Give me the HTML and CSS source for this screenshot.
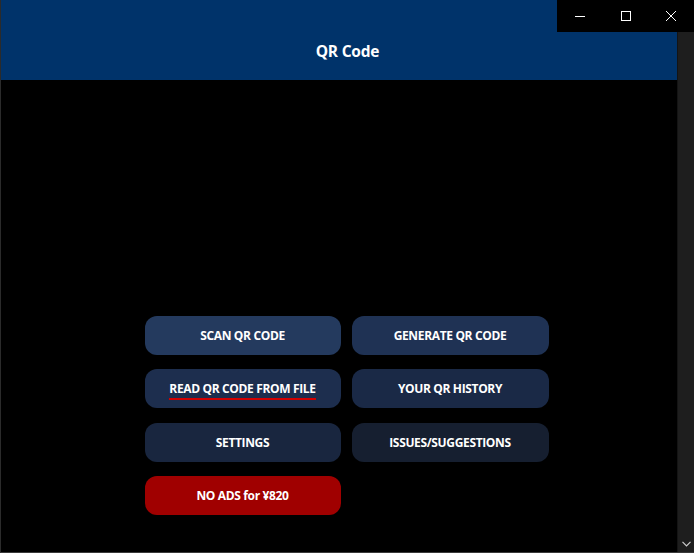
FILE: index.html
```html
<!DOCTYPE html>
<html lang="en">
<head>
  <meta charset="UTF-8" />
  <meta name="viewport" content="width=device-width, initial-scale=1.0"/>
  <title>QR Code</title>
  <link rel="stylesheet" href="styles.css">
</head>
<body>
  <div class="window">
    <header class="app-header">QR Code</header>

    <main class="menu">
      <div class="menu-grid">
        <button class="menu-button scan">SCAN QR CODE</button>
        <button class="menu-button generate">GENERATE QR CODE</button>
        <button class="menu-button read"><span class="spell">READ QR CODE FROM FILE</span></button>
        <button class="menu-button history">YOUR QR HISTORY</button>
        <button class="menu-button settings">SETTINGS</button>
        <button class="menu-button issues">ISSUES/SUGGESTIONS</button>
        <button class="menu-button no-ads">NO ADS for ¥820</button>
      </div>
    </main>

    <!-- window caption buttons sit over the header -->
    <div class="caption-buttons">
      <div class="caption-btn">
        <svg width="10" height="10" viewBox="0 0 10 10"><path d="M0 5.5h10" stroke="#fff" stroke-width="1"/></svg>
      </div>
      <div class="caption-btn">
        <svg width="10" height="10" viewBox="0 0 10 10"><rect x="0.5" y="0.5" width="9" height="9" fill="none" stroke="#fff" stroke-width="1"/></svg>
      </div>
      <div class="caption-btn">
        <svg width="10" height="10" viewBox="0 0 10 10"><path d="M0 0L10 10M10 0L0 10" stroke="#fff" stroke-width="1"/></svg>
      </div>
    </div>

    <div class="scrollbar">
      <svg class="scroll-arrow" width="9" height="6" viewBox="0 0 9 6"><path d="M0.5 0.8L4.5 4.8L8.5 0.8" fill="none" stroke="#ccc" stroke-width="1.2"/></svg>
    </div>
  </div>
</body>
</html>
```

FILE: styles.css
```css
:root {
  --header-bg: #00336a;
  --page-bg: #000000;
  --scroll-bg: #1e1e1e;
  --text-color: #ffffff;
}

html, body {
  margin: 0;
  height: 100%;
}

body {
  font-family: 'Open Sans', 'Noto Sans', sans-serif;
  background-color: var(--page-bg);
  color: var(--text-color);
  overflow: hidden;
}

.window {
  position: relative;
  height: 553px;
  display: flex;
  flex-direction: column;
  border-left: 1px solid #2b2b2b;
  border-bottom: 1px solid #3a3a3a;
  box-sizing: border-box;
}

.app-header {
  height: 80px;
  background-color: var(--header-bg);
  display: flex;
  justify-content: center;
  align-items: center;
  font-size: 15.5px;
  font-weight: 700;
  letter-spacing: -0.2px;
  padding-top: 21px;
  box-sizing: border-box;
}

.menu {
  flex-grow: 1;
  display: flex;
  justify-content: center;
  padding-top: 236px;
}

.menu-grid {
  display: grid;
  grid-template-columns: 196px 197px;
  grid-auto-rows: 39px;
  column-gap: 11px;
  row-gap: 14.3px;
  margin-left: -2px;
}

.menu-button {
  font-family: inherit;
  font-size: 12px;
  font-weight: 700;
  letter-spacing: -0.35px;
  color: var(--text-color);
  border: none;
  border-radius: 12px;
  padding: 0;
  cursor: pointer;
}

.scan { background-color: #243a5e; }
.generate { background-color: #1f3254; }
.read { background-color: #1d2e4e; }
.history { background-color: #1a2946; }
.settings { background-color: #19263f; }
.issues { background-color: #161f30; }
.no-ads { background-color: #a00000; }

.spell {
  border-bottom: 2px solid #d20000;
  padding-bottom: 1px;
}

.caption-buttons {
  position: absolute;
  top: 0;
  right: 0;
  width: 137px;
  height: 32px;
  background: #000;
  display: flex;
  z-index: 2;
}

.caption-btn {
  flex: 1;
  display: flex;
  justify-content: center;
  align-items: center;
}

.scrollbar {
  position: absolute;
  top: 0;
  right: 0;
  bottom: 0;
  width: 17px;
  background-color: var(--scroll-bg);
  border-left: 1px solid #141414;
  display: flex;
  justify-content: center;
  align-items: flex-end;
  padding-bottom: 5px;
  box-sizing: border-box;
}
```
